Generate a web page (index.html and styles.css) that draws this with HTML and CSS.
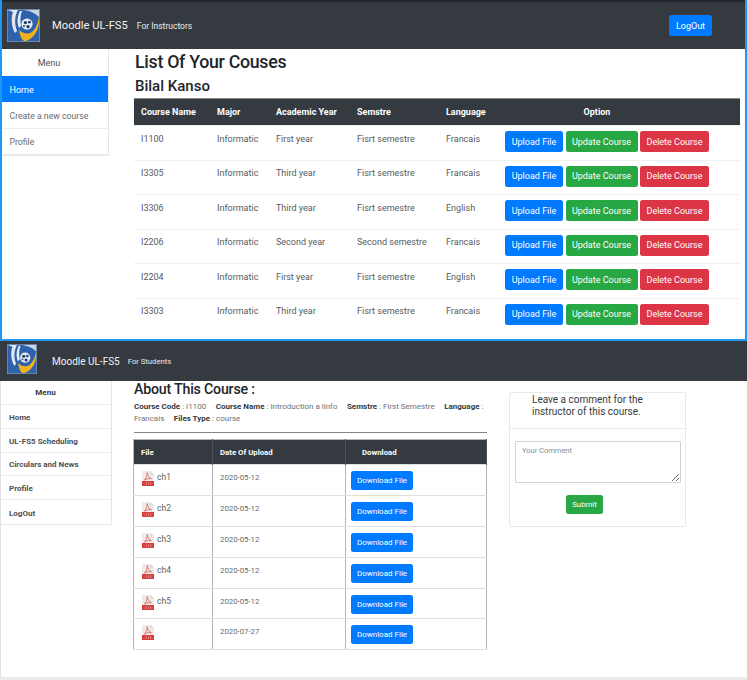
FILE: index.html
```html
<!DOCTYPE html>
<html lang="en">
<head>
<meta charset="utf-8">
<title>Moodle UL-FS5</title>
<link rel="stylesheet" href="styles.css">
</head>
<body>
<svg class="defs" width="0" height="0" aria-hidden="true">
  <symbol id="logo" viewBox="0 0 33 33">
    <rect width="33" height="33" fill="#9aa0a6"/>
    <rect x="0.6" y="0.6" width="31.8" height="31.8" fill="#2f62ad"/>
    <path d="M1 1H11C8 6 7 14 10 22L8 24C4 17 4 8 6 3Z" fill="#dfe8f2"/>
    <path d="M13 2C10 8 10 14 12 19L14 17C13 12 13 7 15 2Z" fill="#e8eef5"/>
    <path d="M32 8V14C31 24 25 30 19 32H17C13 29 13 24 12 21C16 25 22 26 26 22C29 19 31 14 32 8Z" fill="#f2b21c"/>
    <path d="M17 1H32V8C29 5 24 2 17 1Z" fill="#c9d6e6"/>
    <circle cx="20" cy="15" r="5.6" fill="#e9eef3"/>
    <circle cx="18.4" cy="13.6" r="1.7" fill="#1d3f73"/>
    <circle cx="22.4" cy="13.2" r="1.4" fill="#1d3f73"/>
    <circle cx="21" cy="17.6" r="1.7" fill="#1d3f73"/>
    <circle cx="17" cy="17" r="1" fill="#1d3f73"/>
  </symbol>
  <symbol id="pdf" viewBox="0 0 12 15">
    <path d="M0 0H8.5L12 3.5V15H0Z" fill="#eeebe8"/>
    <path d="M8.5 0L12 3.5H8.5Z" fill="#dcd7d2"/>
    <rect y="10" width="12" height="5" fill="#d8403f"/>
    <path d="M5.2 1.6C5.6 4 6.6 6.4 9.4 7.8C7 7.2 4.6 7.6 2.4 9.2C4 7.4 5.4 4.6 5.2 1.6Z" fill="none" stroke="#dc5a56" stroke-width="0.8"/>
    <path d="M3.6 12h1M6 12h1M8.2 12h1M3.6 13.2h1M6 13.2h1M8.2 13.2h1" stroke="#f3c9c7" stroke-width="0.7"/>
  </symbol>
</svg>

<section class="panel panel-top">
  <header class="nav nav-top">
    <svg class="logo logo-lg"><use href="#logo"/></svg>
    <span class="brand">Moodle UL-FS5</span>
    <span class="role role-top">For Instructors</span>
    <a class="btn btn-blue btn-logout">LogOut</a>
  </header>
  <div class="body-top">
    <nav class="side side-top">
      <div class="side-head">Menu</div>
      <a class="side-item active">Home</a>
      <a class="side-item">Create a new course</a>
      <a class="side-item">Profile</a>
    </nav>
    <main class="main-top">
      <h1 class="h-list">List Of Your Couses</h1>
      <h2 class="h-name">Bilal Kanso</h2>
      <table class="courses">
        <thead>
          <tr>
            <th class="c-name">Course Name</th><th class="c-major">Major</th><th class="c-year">Academic Year</th><th class="c-sem">Semstre</th><th class="c-lang">Language</th><th class="c-opt">Option</th>
          </tr>
        </thead>
        <tbody>
          <tr><td>I1100</td><td>Informatic</td><td>First year</td><td>Fisrt semestre</td><td>Francais</td><td class="ops"><div class="ops-row"><a class="btn btn-blue">Upload File</a><a class="btn btn-green">Update Course</a><a class="btn btn-red">Delete Course</a></div></td></tr>
          <tr><td>I3305</td><td>Informatic</td><td>Third year</td><td>Fisrt semestre</td><td>Francais</td><td class="ops"><div class="ops-row"><a class="btn btn-blue">Upload File</a><a class="btn btn-green">Update Course</a><a class="btn btn-red">Delete Course</a></div></td></tr>
          <tr><td>I3306</td><td>Informatic</td><td>Third year</td><td>Fisrt semestre</td><td>English</td><td class="ops"><div class="ops-row"><a class="btn btn-blue">Upload File</a><a class="btn btn-green">Update Course</a><a class="btn btn-red">Delete Course</a></div></td></tr>
          <tr><td>I2206</td><td>Informatic</td><td>Second year</td><td>Second semestre</td><td>Francais</td><td class="ops"><div class="ops-row"><a class="btn btn-blue">Upload File</a><a class="btn btn-green">Update Course</a><a class="btn btn-red">Delete Course</a></div></td></tr>
          <tr><td>I2204</td><td>Informatic</td><td>First year</td><td>Fisrt semestre</td><td>English</td><td class="ops"><div class="ops-row"><a class="btn btn-blue">Upload File</a><a class="btn btn-green">Update Course</a><a class="btn btn-red">Delete Course</a></div></td></tr>
          <tr><td>I3303</td><td>Informatic</td><td>Third year</td><td>Fisrt semestre</td><td>Francais</td><td class="ops"><div class="ops-row"><a class="btn btn-blue">Upload File</a><a class="btn btn-green">Update Course</a><a class="btn btn-red">Delete Course</a></div></td></tr>
        </tbody>
      </table>
    </main>
  </div>
</section>

<section class="panel panel-bottom">
  <header class="nav nav-bottom">
    <svg class="logo logo-sm"><use href="#logo"/></svg>
    <span class="brand brand-sm">Moodle UL-FS5</span>
    <span class="role role-bottom">For Students</span>
  </header>
  <div class="body-bottom">
    <nav class="side side-bottom">
      <div class="side-head2">Menu</div>
      <a class="side-item2">Home</a>
      <a class="side-item2">UL-FS5 Scheduling</a>
      <a class="side-item2">Circulars and News</a>
      <a class="side-item2">Profile</a>
      <a class="side-item2">LogOut</a>
    </nav>
    <main class="main-bottom">
      <h2 class="h-about">About This Course :</h2>
      <div class="meta">
        <span class="meta-item"><b>Course Code</b> : I1100</span>
        <span class="meta-item"><b>Course Name</b> : Introduction a linfo</span>
        <span class="meta-item"><b>Semstre</b> : First Semestre</span>
        <span class="meta-item"><b>Language</b> :</span>
        <span class="meta-item">Francais</span>
        <span class="meta-item"><b>Files Type</b> : course</span>
      </div>
      <hr class="rule">
      <table class="files">
        <thead><tr><th class="f-file">File</th><th class="f-date">Date Of Upload</th><th class="f-dl"><span class="dl-head">Download</span></th></tr></thead>
        <tbody>
          <tr><td><svg class="pdf"><use href="#pdf"/></svg><span class="fname">ch1</span></td><td>2020-05-12</td><td><a class="btn btn-blue btn-dl">Download File</a></td></tr>
          <tr><td><svg class="pdf"><use href="#pdf"/></svg><span class="fname">ch2</span></td><td>2020-05-12</td><td><a class="btn btn-blue btn-dl">Download File</a></td></tr>
          <tr><td><svg class="pdf"><use href="#pdf"/></svg><span class="fname">ch3</span></td><td>2020-05-12</td><td><a class="btn btn-blue btn-dl">Download File</a></td></tr>
          <tr><td><svg class="pdf"><use href="#pdf"/></svg><span class="fname">ch4</span></td><td>2020-05-12</td><td><a class="btn btn-blue btn-dl">Download File</a></td></tr>
          <tr><td><svg class="pdf"><use href="#pdf"/></svg><span class="fname">ch5</span></td><td>2020-05-12</td><td><a class="btn btn-blue btn-dl">Download File</a></td></tr>
          <tr><td><svg class="pdf"><use href="#pdf"/></svg></td><td>2020-07-27</td><td><a class="btn btn-blue btn-dl">Download File</a></td></tr>
        </tbody>
      </table>
    </main>
    <aside class="card">
      <div class="card-head">Leave a comment for the instructor of this course.</div>
      <div class="card-body">
        <textarea class="comment" placeholder="Your Comment"></textarea>
        <a class="btn btn-green btn-submit">Submit</a>
      </div>
    </aside>
  </div>
</section>
</body>
</html>
```
FILE: styles.css
```css
* { box-sizing: border-box; }
html, body { margin: 0; padding: 0; }
body {
  width: 747px;
  height: 680px;
  overflow: hidden;
  background: #fff;
  font-family: Roboto, "Noto Sans", sans-serif;
  color: #212529;
  display: flex;
  flex-direction: column;
}
.defs { position: absolute; }
.panel-top {
  height: 341px;
  border: 2px solid #2196f3;
  border-top: 0;
  display: flex;
  flex-direction: column;
}
.panel-bottom {
  height: 339px;
  border-left: 1px solid #dfe1e3;
  border-bottom: 3px solid #ececec;
  display: flex;
  flex-direction: column;
}
.nav {
  background: #343a40;
  display: flex;
  align-items: center;
  color: #fff;
  flex: none;
}
.nav-top {
  height: 49px;
  border-top: 2px solid #23272b;
  padding-left: 5px;
}
.nav-bottom {
  height: 40px;
  margin-left: -1px;
  padding-left: 7px;
}
.logo-lg { width: 33px; height: 33px; margin-right: 12px; }
.logo-sm { width: 30px; height: 30px; margin-right: 15px; margin-bottom: 4px; }
.brand { font-size: 11.2px; color: #f1f2f3; }
.brand-sm { font-size: 10px; }
.role { font-size: 8.5px; color: #eceded; }
.role-top { margin-left: 9px; }
.role-bottom { margin-left: 8px; font-size: 7.7px; }
.btn {
  display: inline-flex;
  align-items: center;
  justify-content: center;
  height: 21px;
  border-radius: 2.5px;
  font-size: 9px;
  color: #fff;
  white-space: nowrap;
}
.btn-blue { background: #007bff; }
.btn-green { background: #28a745; }
.btn-red { background: #dc3545; }
.btn-logout { margin-left: auto; margin-right: 33px; width: 43px; }

.body-top { display: flex; flex: 1; min-height: 0; }
.side-top {
  width: 107px;
  height: 107px;
  border-right: 1px solid #e6e7e8;
  border-bottom: 1px solid #e6e7e8;
  display: flex;
  flex-direction: column;
  flex: none;
}
.side-head { height: 27px; display: flex; align-items: center; justify-content: center; padding: 1px 12px 0 0; font-size: 9px; color: #495057; }
.side-item {
  height: 26.5px;
  display: flex;
  align-items: center;
  padding: 2px 0 0 7.5px;
  font-size: 8.7px;
  color: #666c72;
  border-bottom: 1px solid #eceded;
}
.side-item.active { background: #007bff; color: #fff; border: 0; height: 27px; font-size: 9px; }
.main-top { margin-left: 25px; width: 606px; }
.h-list { margin: 0; font-size: 17.8px; font-weight: 500; letter-spacing: -0.3px; line-height: 25px; height: 25px; padding-left: 1px; }
.h-name { margin: 0; font-size: 15px; font-weight: 500; line-height: 24px; height: 24px; padding-left: 1px; }
.courses { border-collapse: collapse; table-layout: fixed; width: 606px; font-size: 9px; color: #555b61; }
.courses th {
  background: #343a40;
  color: #fff;
  height: 27px;
  font-weight: 700;
  text-align: left;
  padding: 0 0 0 7px;
  border-top: 1px solid #888;
}
.c-name { width: 76px; }
.c-major { width: 59px; }
.c-year { width: 81px; }
.c-sem { width: 89px; }
.c-lang { width: 64px; }
.courses th.c-opt { text-align: center; padding-right: 56px; }
.courses td {
  height: 34.5px;
  padding: 7.5px 0 0 7px;
  vertical-align: top;
  border-top: 1px solid #eef0f1;
}
.courses td.ops { padding: 5px 0 0 2px; }
.ops-row { display: flex; gap: 2.5px; }
.courses .btn-blue { width: 58px; }
.courses .btn-green { width: 72px; }
.courses .btn-red { width: 69px; }

.body-bottom { display: flex; flex: 1; min-height: 0; }
.side-bottom {
  width: 111px;
  height: 144px;
  flex: none;
  border-right: 1px solid #e6e7e8;
  border-bottom: 1px solid #e6e7e8;
  display: flex;
  flex-direction: column;
}
.side-head2 { height: 24px; display: flex; align-items: center; justify-content: center; font-size: 8px; font-weight: 700; color: #343a40; border-bottom: 1px solid #eceded; padding: 0 21px 0 0; }
.side-item2 { height: 24px; display: flex; align-items: center; padding: 2px 0 0 8px; font-size: 8px; font-weight: 700; color: #4a5157; border-bottom: 1px solid #eceded; }
.side-item2:last-child { border-bottom: 0; }
.main-bottom { margin-left: 22px; width: 353px; flex: none; }
.h-about { margin: -1px 0 0; font-size: 14.2px; font-weight: 500; letter-spacing: -0.2px; line-height: 19px; height: 19px; }
.meta { margin-top: 2px; font-size: 8px; line-height: 12px; color: #6b7177; display: flex; flex-wrap: wrap; column-gap: 9.5px; }
.meta b { color: #343a40; }
.rule { margin: 7px 0 6px; border: 0; border-top: 1px solid #888; }
.files { margin-left: -1px; border-collapse: collapse; table-layout: fixed; width: 354px; font-size: 7.8px; color: #666c72; border: 1px solid #b4b6b8; }
.files th { background: #343a40; color: #fff; height: 25px; font-weight: 700; text-align: left; padding: 0 0 0 7px; border-right: 1px solid #4b5157; }
.f-file { width: 79px; }
.f-date { width: 133px; }
.dl-head { margin-left: 9px; }
.files td { height: 30.9px; padding: 6px 5px 0; vertical-align: top; border: 1px solid #dfe0e1; border-left: 1px solid #b4b6b8; border-right: 1px solid #b4b6b8; }
.files td:nth-child(2) { padding: 8px 7px 0; }
.pdf { width: 12px; height: 15px; margin: 0 0 0 3px; vertical-align: top; }
.fname { margin: -1px 0 0 3px; color: #5b6167; line-height: 14px; font-size: 8.5px; display: inline-block; vertical-align: top; }
.btn-dl { width: 62px; height: 19px; font-size: 8px; }
.card {
  margin-left: 22px;
  margin-top: 11px;
  width: 177px;
  height: 135px;
  border: 1px solid #e8e9ea;
  border-radius: 2px;
  flex: none;
  display: flex;
  flex-direction: column;
}
.card-head { height: 36px; padding: 1px 12px 0 22px; font-size: 10px; line-height: 11.7px; color: #343a40; border-bottom: 1px solid #e8e9ea; }
.card-body { padding: 12px 5px; display: flex; flex-direction: column; }
.comment { width: 166px; height: 42px; font: 7.5px Roboto, sans-serif; padding: 4px 6px; border: 1px solid #ced4da; border-radius: 1px; display: block; }
.comment::placeholder { color: #868e96; }
.btn-submit { width: 37px; height: 19px; font-size: 7.8px; margin: 12px 0 0 51px; }
```
